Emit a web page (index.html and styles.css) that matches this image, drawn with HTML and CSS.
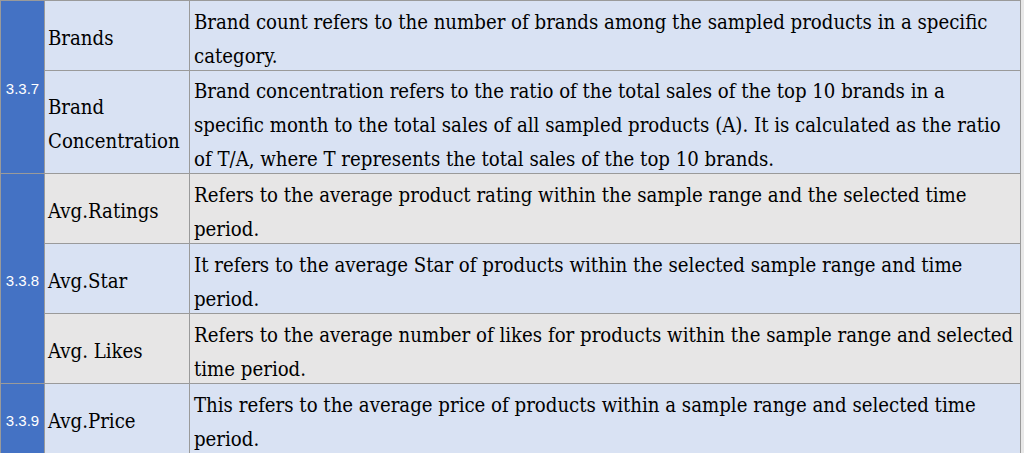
FILE: index.html
```html
<!DOCTYPE html>
<html>
<head>
<meta charset="utf-8">
<link rel="stylesheet" href="styles.css">
</head>
<body>
<table class="defs">
  <colgroup>
    <col class="c-num">
    <col class="c-label">
    <col class="c-desc">
  </colgroup>
  <tbody>
    <tr class="blue h2">
      <td class="num" rowspan="2">3.3.7</td>
      <td class="label">Brands</td>
      <td class="desc"><div class="txt">Brand count refers to the number of brands among the sampled products in a specific category.</div></td>
    </tr>
    <tr class="blue h3">
      <td class="label">Brand Concentration</td>
      <td class="desc"><div class="txt">Brand concentration refers to the ratio of the total sales of the top 10 brands in a<br>specific month to the total sales of all sampled products (A). It is calculated as the ratio of T/A, where T represents the total sales of the top 10 brands.</div></td>
    </tr>
    <tr class="gray h2">
      <td class="num" rowspan="3">3.3.8</td>
      <td class="label">Avg.Ratings</td>
      <td class="desc"><div class="txt">Refers to the average product rating within the sample range and the selected time period.</div></td>
    </tr>
    <tr class="blue h2">
      <td class="label">Avg.Star</td>
      <td class="desc"><div class="txt">It refers to the average Star of products within the selected sample range and time period.</div></td>
    </tr>
    <tr class="gray h2">
      <td class="label">Avg. Likes</td>
      <td class="desc"><div class="txt">Refers to the average number of likes for products within the sample range and selected time period.</div></td>
    </tr>
    <tr class="blue h2">
      <td class="num">3.3.9</td>
      <td class="label">Avg.Price</td>
      <td class="desc"><div class="txt">This refers to the average price of products within a sample range and selected time period.</div></td>
    </tr>
  </tbody>
</table>
</body>
</html>
```
FILE: styles.css
```css
html, body {
  margin: 0;
  padding: 0;
  background: #e8e8e8;
}

.defs {
  border-collapse: collapse;
  table-layout: fixed;
  width: 1021px;
  font-family: "DejaVu Serif Condensed", "DejaVu Serif", serif;
  font-stretch: condensed;
  font-size: 20.2px;
  line-height: 34px;
  color: #000;
}

.c-num { width: 44px; }
.c-label { width: 145px; }
.c-desc { width: 831px; }

.defs td {
  border: 1px solid #9a9a9a;
  padding: 0;
  vertical-align: middle;
}

.h2 { height: 70px; }
.h3 { height: 101px; }

.blue td { background: #d9e2f3; }
.gray td { background: #e7e6e6; }

.defs td.num {
  background: #4472c4;
  color: #ffffff;
  font-family: "Liberation Sans", Arial, sans-serif;
  font-stretch: normal;
  font-size: 15px;
  line-height: 16px;
  text-align: center;
  padding: 4px 0 0;
}

.defs td.label {
  padding: 4px 0 0 3px;
}

.defs td.desc {
  padding: 0 4px;
}

.txt {
  margin: 3px 0 -3px;
}
```
